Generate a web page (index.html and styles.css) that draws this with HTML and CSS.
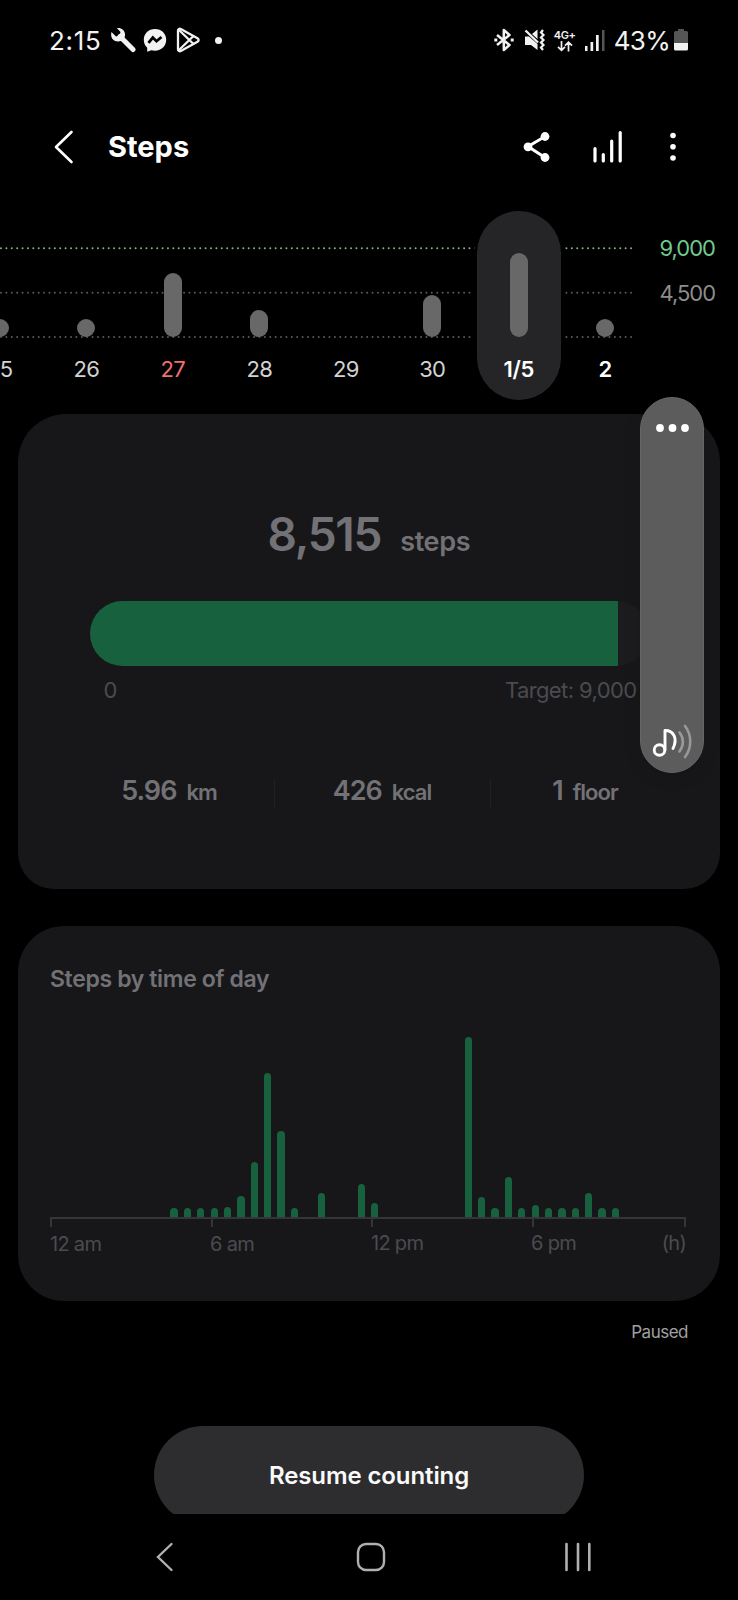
FILE: index.html
```html
<!DOCTYPE html>
<html lang="en">
<head>
    <meta charset="UTF-8">
    <meta name="viewport" content="width=device-width, initial-scale=1.0">
    <title>Steps</title>
    <link rel="stylesheet" href="styles.css">
</head>
<body>
    <div class="phone">
        <div class="status-bar">
            <span class="clock">2:15</span>
            <div class="status-left">
                <svg width="26" height="26" viewBox="0 0 26 26"><path d="M10 9.500L23 22.500" stroke="#f2f2f2" stroke-width="5" stroke-linecap="round"/><path d="M1.500 5C0 10 3 14.500 8 14.500C12.500 14.500 15.500 11 15 7C14.600 3.200 11 .500 7 1.200L10.500 5L9.500 8.500L6 9.500Z" fill="#f2f2f2"/></svg>
                <svg class="messenger" width="24" height="25" viewBox="0 0 24 25"><path d="M12 1C5.500 1 .800 5.700 .800 11.800C.800 15 2 17.800 4.200 19.800V23.800L8.200 22.200C9.400 22.500 10.700 22.700 12 22.700C18.500 22.700 23.200 18 23.200 11.800C23.200 5.700 18.500 1 12 1Z" fill="#f2f2f2"/><path d="M5.500 14.800L9.800 9.500L13.500 13.200L18.500 9" fill="none" stroke="#000" stroke-width="2.800"/></svg>
                <svg class="play" width="25" height="26" viewBox="0 0 25 26" fill="none" stroke="#f2f2f2" stroke-width="2.300" stroke-linejoin="round"><path d="M2 3.500C2 2 3.500 1.300 4.800 2L21.500 11.300C23 12.200 23 13.800 21.500 14.700L4.800 24C3.500 24.700 2 24 2 22.500Z"/><path d="M3 3L17.500 17M3 23L17.500 9"/></svg>
                <span class="dot"></span>
            </div>
            <div class="status-right">
                <svg width="20" height="24" viewBox="0 0 20 24" fill="none" stroke="#f2f2f2" stroke-width="2.500" stroke-linejoin="round"><path d="M3 7L15.500 17L9.800 22V2L15.500 7L3 17"/><path d="M.300 12h3M16.700 12h3" stroke-width="3"/></svg>
                <svg class="mute" width="22" height="24" viewBox="0 0 22 24"><path d="M1 8.500H5L13.500 16V22L7 17H1ZM8 6L13.500 1.500V11Z" fill="#f2f2f2"/><path d="M1.500 2.500L14 14.500" stroke="#f2f2f2" stroke-width="2.400"/><path d="M19 2L17 4.500L19.500 7L17 9.500L19.500 12L17 14.500L19.500 17L17 19.500L19 22" fill="none" stroke="#f2f2f2" stroke-width="2.200"/></svg>
                <div class="network">
                    <span>4G+</span>
                    <svg width="16" height="11" viewBox="0 0 16 11" fill="none" stroke="#f2f2f2" stroke-width="1.700"><path d="M4.500 0V9M1 5.800L4.500 9.300L8 5.800M11.500 10.500V1.500M8 4.700L11.500 1.200L15 4.700"/></svg>
                </div>
                <svg class="signal" width="20" height="21" viewBox="0 0 20 21"><g fill="#f2f2f2"><rect x="0" y="16" width="2.500" height="5"/><rect x="5.500" y="12" width="2.700" height="9"/><rect x="11" y="5" width="2.700" height="16"/></g><rect x="17" y="0" width="2.500" height="21" fill="#555"/></svg>
                <span class="percent">43%</span>
                <svg class="battery" width="14" height="22" viewBox="0 0 14 22"><path d="M4 0H10V2H12.500Q14 2 14 3.500V14H0V3.500Q0 2 1.500 2H4Z" fill="#555"/><path d="M0 14H14V20Q14 21.500 12.500 21.500H1.500Q0 21.500 0 20Z" fill="#f2f2f2"/></svg>
            </div>
        </div>

        <div class="header">
            <svg width="20" height="34" viewBox="0 0 20 34" fill="none" stroke="#fff" stroke-width="2.600" stroke-linecap="round" stroke-linejoin="round"><path d="M17.500 2L2 17L17.500 32"/></svg>
            <h1>Steps</h1>
            <div class="actions">
                <svg width="28" height="32" viewBox="0 0 28 32"><path d="M22 5.500L5 15.500L22 26.500" fill="none" stroke="#fff" stroke-width="3"/><g fill="#fff"><circle cx="22" cy="5.500" r="4.400"/><circle cx="5" cy="15.800" r="4.400"/><circle cx="22" cy="26.500" r="4.400"/></g></svg>
                <svg class="bars-icon" width="30" height="34" viewBox="0 0 30 34" stroke="#fff" stroke-width="3.200" stroke-linecap="round"><path d="M2 18.500V31M10.300 24.500V31M18.700 11V31M27.200 2.500V31"/></svg>
                <svg class="more-icon" width="6" height="30" viewBox="0 0 6 30" fill="#fff"><circle cx="3" cy="3.500" r="2.800"/><circle cx="3" cy="14.800" r="2.800"/><circle cx="3" cy="26" r="2.800"/></svg>
            </div>
        </div>

        <div class="week">
            <div class="week-chart">
                <svg class="grid-lines" width="680" height="189" fill="none" stroke-width="2" stroke-linecap="round" stroke-dasharray="0 5.385">
                    <path d="M44 37.300H676" stroke="#86b288"/>
                    <path d="M44 81.700H676" stroke="#5a5a5a"/>
                    <path d="M44 126H676" stroke="#5a5a5a"/>
                </svg>
                <div class="days">
                    <div class="day"><div class="track"><i style="height: 18px"></i></div><span>25</span></div>
                    <div class="day"><div class="track"><i style="height: 18px"></i></div><span>26</span></div>
                    <div class="day holiday"><div class="track"><i style="height: 64px"></i></div><span>27</span></div>
                    <div class="day"><div class="track"><i style="height: 27px"></i></div><span>28</span></div>
                    <div class="day"><div class="track"></div><span>29</span></div>
                    <div class="day"><div class="track"><i style="height: 42px"></i></div><span>30</span></div>
                    <div class="day selected"><div class="track"><i style="height: 84px"></i></div><span>1/5</span></div>
                    <div class="day current"><div class="track"><i style="height: 18px"></i></div><span>2</span></div>
                </div>
            </div>
            <div class="week-scale">
                <span class="goal">9,000</span>
                <span>4,500</span>
            </div>
        </div>

        <div class="card summary">
            <div class="total"><span class="count">8,515</span><span class="unit">steps</span></div>
            <div class="progress"><div class="progress-fill" style="width: 94.6%"></div></div>
            <div class="progress-labels"><span>0</span><span class="target">Target: 9,000</span></div>
            <div class="stats">
                <div class="stat"><b>5.96</b><span>km</span></div>
                <div class="stat"><b>426</b><span>kcal</span></div>
                <div class="stat"><b>1</b><span>floor</span></div>
            </div>
        </div>

        <div class="card hourly">
            <h2>Steps by time of day</h2>
            <div class="hour-bars" id="hourBars"></div>
            <div class="axis"><i></i><i></i><i></i><i></i><i></i></div>
            <div class="hours"><span>12 am</span><span>6 am</span><span class="pm">12 pm</span><span class="pm">6 pm</span><span class="pm">(h)</span></div>
        </div>

        <div class="paused">Paused</div>

        <div class="footer">
            <button class="resume">Resume counting</button>
        </div>

        <div class="nav-bar">
            <svg width="18" height="30" viewBox="0 0 18 30" fill="none" stroke="#b0b0b0" stroke-width="2.400" stroke-linecap="round"><path d="M15.500 2L2 15L15.500 28"/></svg>
            <svg class="home" width="30" height="30" viewBox="0 0 30 30" fill="none" stroke="#b0b0b0" stroke-width="2.400"><rect x="2" y="2" width="26" height="26" rx="8"/></svg>
            <svg width="28" height="30" viewBox="0 0 28 30" fill="none" stroke="#b0b0b0" stroke-width="2.600" stroke-linecap="round"><path d="M2.500 2V28M14 2V28M25.300 2V28"/></svg>
        </div>

        <div class="volume">
            <svg width="33" height="10" viewBox="0 0 33 10" fill="#fff"><circle cx="4" cy="5" r="3.900"/><circle cx="16.500" cy="5" r="3.900"/><circle cx="29" cy="5" r="3.900"/></svg>
            <svg width="42" height="36" viewBox="0 0 42 36" fill="none" stroke="#fff" stroke-width="2.900" stroke-linecap="round" stroke-linejoin="round"><circle cx="8.500" cy="26" r="5.300"/><path d="M14 26V6.500C22.500 6.500 27 14 22 24.500"/><path d="M28.500 8.500C33 14 33 21.500 28.500 27.500" stroke="#999" stroke-width="2.600"/><path d="M34 2C41 11 41 24 34 33" stroke="#999" stroke-width="2.600"/></svg>
        </div>
    </div>
    <script>
        // Bar heights for every half hour, starting at midnight
        const steps = [0, 0, 0, 0, 0, 0, 0, 0, 0, 9, 9, 9, 9, 10, 21, 55, 144, 86, 9, 0, 24, 0, 0, 33,
            14, 0, 0, 0, 0, 0, 0, 180, 20, 9, 40, 9, 12, 9, 9, 9, 24, 9, 9, 0, 0, 0, 0, 0];
        const hourBars = document.getElementById('hourBars');
        steps.forEach(height => {
            const bar = document.createElement('i');
            bar.style.height = height + 'px';
            hourBars.appendChild(bar);
        });
    </script>
</body>
</html>
```
FILE: styles.css
```css
body {
    margin: 0;
    background-color: #000;
    color: #fff;
    font-family: Inter, Roboto, sans-serif;
}
svg {
    display: block;
    flex: none;
}
.phone {
    position: relative;
    display: flex;
    flex-direction: column;
    width: 738px;
    height: 1600px;
    overflow: hidden;
}

/* Status bar */
.status-bar {
    display: flex;
    align-items: center;
    height: 80px;
    padding: 0 50px 0 49px;
    color: #f2f2f2;
    font-size: 26px;
}
.clock {
    width: 61px;
    letter-spacing: 0.7px;
}
.status-left, .status-right {
    display: flex;
    align-items: center;
}
.messenger {
    margin-left: 7px;
}
.play {
    margin-left: 9px;
}
.dot {
    width: 7px;
    height: 7px;
    margin-left: 14px;
    border-radius: 50%;
    background-color: #f2f2f2;
}
.status-right {
    margin-left: auto;
}
.mute {
    margin-left: 10px;
}
.network {
    display: flex;
    flex-direction: column;
    align-items: center;
    width: 24px;
    margin-left: 7px;
    font-size: 11px;
    font-weight: 600;
    line-height: 12px;
    letter-spacing: -0.3px;
}
.signal {
    margin-left: 8px;
}
.percent {
    margin-left: 9px;
    letter-spacing: -0.7px;
}
.battery {
    margin-left: 4px;
}

/* Header */
.header {
    display: flex;
    align-items: center;
    height: 129px;
    padding: 2px 62px 0 54px;
}
.header h1 {
    margin: 0 0 0 34px;
    font-size: 29px;
    font-weight: 700;
}
.actions {
    display: flex;
    align-items: center;
    margin-left: auto;
}
.bars-icon {
    margin-left: 42px;
}
.more-icon {
    margin-left: 47px;
}

/* Week chart */
.week {
    display: flex;
    height: 189px;
    font-size: 22px;
    line-height: 24px;
}
.week-chart {
    display: grid;
    width: 692px;
    margin-left: -43.500px;
}
.grid-lines, .days {
    grid-area: 1 / 1;
}
.days {
    display: flex;
}
.day {
    display: flex;
    flex-direction: column;
    align-items: center;
    width: 84px;
    margin: 0 1.250px;
    color: #d2d2d2;
    letter-spacing: -0.8px;
}
.track {
    display: flex;
    align-items: flex-end;
    height: 126px;
    margin-bottom: 20px;
}
.track i {
    width: 18px;
    border-radius: 9px;
    background-color: #686868;
}
.holiday {
    color: #f0716f;
}
.selected {
    border-radius: 42px;
    background-color: #252527;
    box-shadow: 0 0 0 3px #000;
}
.selected, .current {
    color: #fff;
    font-weight: 600;
    letter-spacing: -0.3px;
}
.week-scale {
    display: flex;
    flex-direction: column;
    gap: 21px;
    margin-left: 11px;
    padding-top: 25px;
    color: #8c8c8c;
    letter-spacing: -1px;
}
.goal {
    color: #72c88e;
}

/* Cards */
.card {
    box-sizing: border-box;
    width: 702px;
    margin-left: 18px;
    background-color: #17171a;
}
.summary {
    height: 475px;
    margin-top: 14px;
    padding: 90px 71.500px 0;
    border-radius: 48px 48px 36px 36px;
    color: #727276;
    font-weight: 600;
}
.total {
    display: flex;
    justify-content: center;
    align-items: baseline;
    height: 60px;
    line-height: 60px;
}
.count {
    font-size: 46px;
    letter-spacing: -1.3px;
}
.unit {
    margin-left: 19px;
    font-size: 27px;
    letter-spacing: -0.3px;
}
.progress {
    height: 65px;
    margin-top: 37px;
    border-radius: 33px;
    background-color: #1c1c1e;
    overflow: hidden;
}
.progress-fill {
    height: 100%;
    background-color: #18613e;
}
.progress-labels {
    display: flex;
    justify-content: space-between;
    margin-top: 12px;
    padding: 0 12px 0 14px;
    color: #4b4b4f;
    font-size: 22px;
    font-weight: 400;
    line-height: 24px;
}
.target {
    letter-spacing: -0.6px;
}
.stats {
    display: grid;
    grid-template-columns: 209px 216px 190px;
    height: 30px;
    margin: 76px -25px 0;
}
.stat {
    display: flex;
    justify-content: center;
    align-items: baseline;
    font-size: 22px;
    line-height: 25px;
    letter-spacing: -1px;
}
.stat + .stat {
    border-left: 1px solid #212124;
}
.stat b {
    margin-right: 10px;
    font-size: 27px;
    font-weight: 600;
}

/* Steps by time of day */
.hourly {
    height: 375px;
    margin-top: 37px;
    padding: 38px 34px 0 32px;
    border-radius: 46px;
}
.hourly h2 {
    margin: 0;
    color: #727276;
    font-size: 23px;
    font-weight: 600;
    line-height: 30px;
    letter-spacing: -0.35px;
}
.hour-bars {
    display: flex;
    justify-content: space-between;
    align-items: flex-end;
    height: 223px;
}
.hour-bars i {
    width: 7.300px;
    border-radius: 4px 4px 0 0;
    background-color: #18613e;
}
.axis {
    display: grid;
    grid-template-columns: 160.500px 160.500px 160.500px 1fr 2px;
    height: 8px;
    border-top: 2px solid #353537;
}
.axis i {
    width: 2px;
    background-color: #353537;
}
.hours {
    display: grid;
    grid-template-columns: 160px 161px 160px 1fr auto;
    padding-top: 5px;
    color: #4b4b4f;
    font-size: 20px;
    line-height: 24px;
    letter-spacing: -0.7px;
}
.pm {
    margin-top: -1px;
}

.paused {
    height: 61px;
    padding-right: 50px;
    color: #a0a0a0;
    font-size: 17px;
    line-height: 62px;
    letter-spacing: -0.5px;
    text-align: right;
}
.footer {
    height: 88px;
    margin-top: 64px;
    overflow: hidden;
}
.resume {
    display: block;
    width: 430px;
    height: 98px;
    margin: 0 auto;
    border: none;
    border-radius: 49px;
    background-color: #2d2d2f;
    color: #fafafa;
    font-family: inherit;
    font-size: 24px;
    font-weight: 600;
    letter-spacing: -0.1px;
    cursor: pointer;
}
.nav-bar {
    display: flex;
    align-items: center;
    height: 86px;
    padding-left: 156px;
}
.home {
    margin: 0 178px 0 182px;
}

/* Volume panel floating over the page */
.volume {
    position: absolute;
    top: 397px;
    left: 640px;
    box-sizing: border-box;
    display: flex;
    flex-direction: column;
    justify-content: space-between;
    align-items: center;
    width: 64px;
    height: 376px;
    padding: 25px 0 12px;
    border: 1px solid #666;
    border-radius: 32px;
    background-color: #5c5c5c;
    box-shadow: 0 4px 18px rgba(0, 0, 0, 0.1);
}
```
